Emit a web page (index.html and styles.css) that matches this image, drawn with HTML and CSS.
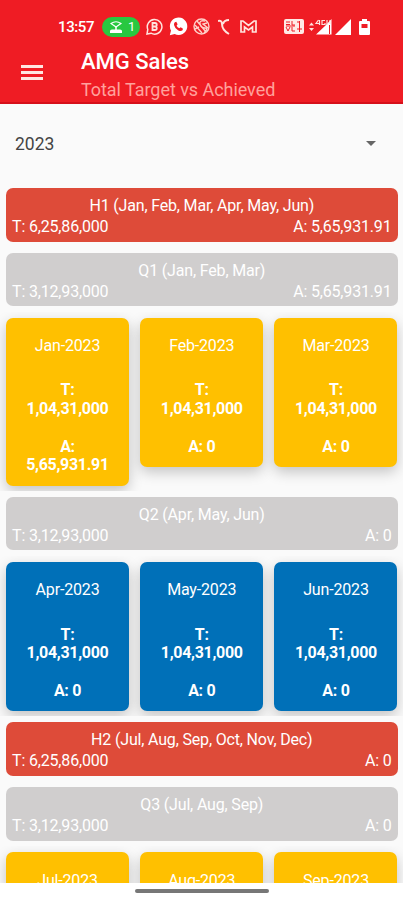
FILE: index.html
```
<!DOCTYPE html>
<html lang="en">
<head>
  <meta charset="UTF-8">
  <meta name="viewport" content="width=device-width, initial-scale=1.0">
  <title>AMG Sales</title>
  <link rel="stylesheet" href="styles.css">
</head>
<body>

  <header>
    <div class="status-bar">
      <span class="time">13:57</span>
      <span class="hotspot">
        <svg width="12" height="12" viewBox="0 0 12 12" fill="none" stroke="#fff">
          <path d="M1 2.5Q6-1 11 2.5L6 6z" stroke-width="1.2"/>
          <path d="M6 5v4" stroke-width="1.500"/>
          <path d="M0 12v-2Q0 8.500 2 8.500h8q2 0 2 1.500v2z" fill="#fff" stroke="none"/>
        </svg>
        <span>1</span>
      </span>
      <svg class="icon-business" width="17" height="17" viewBox="0 0 17 17" fill="none" stroke="#ffe3dd">
        <path d="M1 16l.8-4.500A7.300 7.300 0 1 1 5 15.200z" stroke-width="1.500"/>
        <path d="M6.500 5v7h2.500a1.700 1.700 0 0 0 0-3.500H6.500 9A1.700 1.700 0 0 0 9 5z" stroke-width="1.800"/>
      </svg>
      <svg class="icon-call" width="19" height="19" viewBox="0 0 19 19">
        <path d="M.8 18.200l1.200-4.700A8.700 8.700 0 1 1 5.700 17z" fill="#fff"/>
        <path d="M5.800 5.200l1.500-.4 1.300 2.500-1 1.400q.8 1.700 2.700 2.600l1.400-1 2.300 1.400-.5 1.600q-1.500 1.500-4.200.2Q5.800 11.500 5 8q-.2-1.700.8-2.800z" fill="#ef1c24"/>
      </svg>
      <svg class="icon-globe" width="17" height="17" viewBox="0 0 17 17" fill="none" stroke="#ffd0c9" stroke-width="1.400">
        <circle cx="8.500" cy="8.500" r="7.500"/>
        <path d="M4 3l9 11M2 7l7 8M12 3Q6 2 7 6t5 4-1 5M14 5l-4 1 5 4M2 11l4-2"/>
      </svg>
      <svg class="icon-swirl" width="12" height="16" viewBox="0 0 12 16" fill="none" stroke="#ffe3dd" stroke-width="2">
        <path d="M0 2q4-1 4 3 0 6 7 10M11 1Q6 1 5 5"/>
      </svg>
      <svg class="icon-mail" width="17" height="13" viewBox="0 0 17 13" fill="none" stroke="#ffe3dd" stroke-width="1.700">
        <path d="M1 12V1h2l5.500 4.500L14 1h2v11h-3.500V7l-4 3-4-3v5z"/>
      </svg>
      <svg class="icon-volte" width="20" height="15" viewBox="0 0 20 15">
        <rect width="20" height="15" rx="2" fill="#ffe9e5"/>
        <path d="M2 3h4M2 5.500h4M8 2v4h3M13 3h2M2 8l2 4 2-4M8 8v4h3M15.500 2v11M13 10h5M2 7h9" stroke="#ef1c24" stroke-width="1" fill="none"/>
      </svg>
      <svg class="icon-4g" width="23" height="16" viewBox="0 0 23 16">
        <path d="M0 6.500L2.500 3.500 5 6.500zM0 9h5l-2.500 3z" fill="#ffe3dd"/>
        <path d="M22.500 0v15.500H7L17 6z" fill="#fff"/>
        <path d="M9.500 1L7 4.500h4M10.500 1v5M16 1.500h-3v4h3V4M18 1v5M21 1v4" stroke="#ffe3dd" stroke-width="1.200" fill="none"/>
        <path d="M20.500 6v9" stroke="#ef1c24"/>
      </svg>
      <svg class="icon-signal" width="16" height="16" viewBox="0 0 16 16"><path d="M16 0v16H0z" fill="#fff"/></svg>
      <svg class="icon-battery" width="11" height="16" viewBox="0 0 11 16">
        <path d="M3 0h5v2h2q1 0 1 1v12q0 1-1 1H1q-1 0-1-1V3q0-1 1-1h2z" fill="#fff"/>
        <path d="M2.500 5h6v4h-6z" fill="#ef1c24"/>
      </svg>
    </div>
    <div class="app-bar">
      <div class="menu"><i></i><i></i><i></i></div>
      <div>
        <h1>AMG Sales</h1>
        <p class="subtitle">Total Target vs Achieved</p>
      </div>
    </div>
  </header>

  <main>
    <div class="year-select">
      <span>2023</span>
      <span class="arrow"></span>
    </div>

    <div class="bar half">
      <p>H1 (Jan, Feb, Mar, Apr, May, Jun)</p>
      <div class="totals"><span>T: 6,25,86,000</span><span>A: 5,65,931.91</span></div>
    </div>
    <div class="bar">
      <p>Q1 (Jan, Feb, Mar)</p>
      <div class="totals"><span>T: 3,12,93,000</span><span>A: 5,65,931.91</span></div>
    </div>
    <div class="months">
      <div class="card"><p>Jan-2023</p><b>T:<br>1,04,31,000</b><b>A:<br>5,65,931.91</b></div>
      <div class="card"><p>Feb-2023</p><b>T:<br>1,04,31,000</b><b>A: 0</b></div>
      <div class="card"><p>Mar-2023</p><b>T:<br>1,04,31,000</b><b>A: 0</b></div>
    </div>

    <div class="bar">
      <p>Q2 (Apr, May, Jun)</p>
      <div class="totals"><span>T: 3,12,93,000</span><span>A: 0</span></div>
    </div>
    <div class="months blue">
      <div class="card"><p>Apr-2023</p><b>T:<br>1,04,31,000</b><b>A: 0</b></div>
      <div class="card"><p>May-2023</p><b>T:<br>1,04,31,000</b><b>A: 0</b></div>
      <div class="card"><p>Jun-2023</p><b>T:<br>1,04,31,000</b><b>A: 0</b></div>
    </div>

    <div class="bar half">
      <p>H2 (Jul, Aug, Sep, Oct, Nov, Dec)</p>
      <div class="totals"><span>T: 6,25,86,000</span><span>A: 0</span></div>
    </div>
    <div class="bar">
      <p>Q3 (Jul, Aug, Sep)</p>
      <div class="totals"><span>T: 3,12,93,000</span><span>A: 0</span></div>
    </div>
    <div class="months">
      <div class="card"><p>Jul-2023</p></div>
      <div class="card"><p>Aug-2023</p></div>
      <div class="card"><p>Sep-2023</p></div>
    </div>
  </main>

  <footer><div class="home-line"></div></footer>

</body>
</html>
```
FILE: styles.css
```
* {
  box-sizing: border-box;
}

body {
  margin: 0;
  height: 900px;
  display: flex;
  flex-direction: column;
  overflow: hidden;
  background: #fafafa;
  font-family: Roboto, sans-serif;
  font-size: 16px;
}

h1, p {
  margin: 0;
}

header {
  flex: none;
  height: 104px;
  background: #ef1c24;
  border-bottom: 2px solid #d6101b;
  color: #fff;
}

.status-bar {
  display: flex;
  align-items: center;
  height: 48px;
  padding: 5px 33px 0 58px;
}

.status-bar svg {
  flex: none;
}

.time {
  width: 44px;
  font-size: 15px;
  font-weight: 500;
  letter-spacing: -0.4px;
}

.hotspot {
  display: flex;
  align-items: center;
  gap: 6px;
  width: 38px;
  height: 20px;
  padding-left: 8px;
  border-radius: 10px;
  background: #28c840;
  font-size: 13px;
}

.icon-business { margin-left: 6px; }
.icon-call { margin-left: 6px; }
.icon-globe { margin-left: 5px; }
.icon-swirl { margin-left: 8px; }
.icon-mail { margin-left: 10px; }
.icon-volte { margin-left: auto; }
.icon-4g { margin-left: 5px; }
.icon-signal { margin-left: 3px; }
.icon-battery { margin-left: 8px; }

.app-bar {
  display: flex;
  padding-left: 21px;
}

.menu {
  display: flex;
  flex-direction: column;
  gap: 3px;
  width: 60px;
  padding-top: 17px;
}

.menu i {
  width: 22px;
  height: 3px;
  background: #ffe6e2;
}

h1 {
  font-size: 22px;
  font-weight: 500;
  line-height: 28px;
}

.subtitle {
  font-size: 18px;
  line-height: 27px;
  letter-spacing: -0.05px;
  color: #ffa19c;
}

main {
  flex: 1;
  min-height: 0;
  overflow: hidden;
}

.year-select {
  display: flex;
  align-items: center;
  justify-content: space-between;
  height: 84px;
  padding: 0 27px 5px 15px;
  font-size: 17.5px;
  color: #444;
}

.arrow {
  border: 5px solid transparent;
  border-top: 5px solid #666;
  border-bottom: 0;
}

.bar {
  height: 53.5px;
  margin: 0 5.5px 11.3px 6px;
  padding: 8px 6px 0;
  border-radius: 7px;
  background: #d0cece;
  color: #fff;
  line-height: 19px;
  letter-spacing: -0.17px;
  text-align: center;
}

.half {
  background: #de4b39;
}

.totals {
  display: flex;
  justify-content: space-between;
  margin-top: 2px;
}

/* negative margin lets the card shadows start above the row */
.months {
  display: grid;
  grid-template-columns: repeat(3, 1fr);
  gap: 11.2px;
  align-items: start;
  margin: -6px 0 6.3px;
  padding: 6px 5.5px 5px 6px;
  overflow: hidden;
}

.card {
  padding: 19.8px 10px 10.7px;
  border-radius: 7px;
  background: #ffc000;
  box-shadow: 0 5px 14px rgba(0, 0, 0, 0.22);
  color: #fff;
  line-height: 18.6px;
  letter-spacing: -0.17px;
  text-align: center;
}

.card p {
  height: 18.6px;
  margin-bottom: 25.5px;
}

.card b {
  display: block;
  letter-spacing: -0.3px;
}

.card b + b {
  margin-top: 19px;
}

.blue .card {
  background: #0070b8;
}

footer {
  flex: none;
  height: 17.5px;
  padding-top: 6px;
  background: #fff;
}

.home-line {
  width: 134px;
  height: 4px;
  margin: 0 auto;
  border-radius: 2px;
  background: #777;
}
```
